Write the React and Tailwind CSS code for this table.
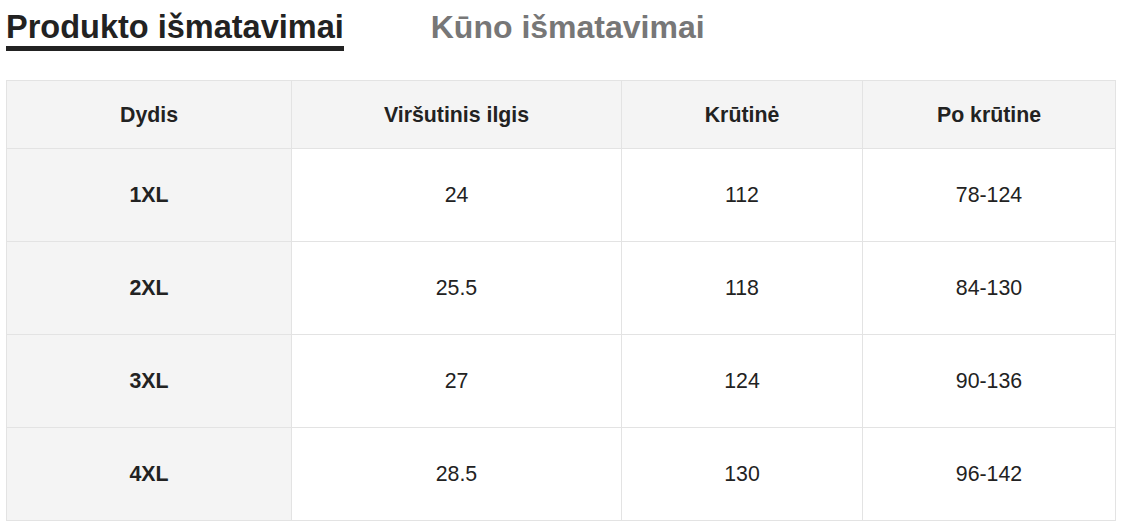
import React from "react";

const headers = ["Dydis", "Viršutinis ilgis", "Krūtinė", "Po krūtine"];
const rows = [
  ["1XL", "24", "112", "78-124"],
  ["2XL", "25.5", "118", "84-130"],
  ["3XL", "27", "124", "90-136"],
  ["4XL", "28.5", "130", "96-142"],
];

export default function App() {
  return (
    <div
      className="w-[1122px] h-[532px] bg-white text-[#222]"
      style={{ fontFamily: '"Liberation Sans", Arial, Helvetica, sans-serif' }}
    >
      <div className="flex pl-[6px] gap-[87px]">
        <div className="pt-[11px] pb-[3px] border-b-[5px] border-[#222] text-[32.5px] leading-[32px] font-bold text-[#222] whitespace-nowrap">
          Produkto išmatavimai
        </div>
        <div className="pt-[11px] pb-[3px] text-[32px] leading-[32px] font-bold text-[#777] whitespace-nowrap">
          Kūno išmatavimai
        </div>
      </div>
      <div className="ml-[6px] mt-[29px] w-[1110px] grid grid-cols-[285px_330px_241px_253px] border-l border-t border-[#e3e3e3] text-[21.3px]">
        {headers.map((h) => (
          <div
            key={h}
            className="h-[68px] pt-[2px] flex items-center justify-center bg-[#f4f4f4] border-r border-b border-[#e3e3e3] font-bold"
          >
            {h}
          </div>
        ))}
        {rows.map((r) =>
          r.map((c, i) => (
            <div
              key={r[0] + i}
              className={
                i === 0
                  ? "h-[93px] pt-[2px] flex items-center justify-center bg-[#f4f4f4] border-r border-b border-[#e3e3e3] font-bold"
                  : "h-[93px] pt-[2px] flex items-center justify-center bg-white border-r border-b border-[#e3e3e3]"
              }
            >
              {c}
            </div>
          ))
        )}
      </div>
    </div>
  );
}
